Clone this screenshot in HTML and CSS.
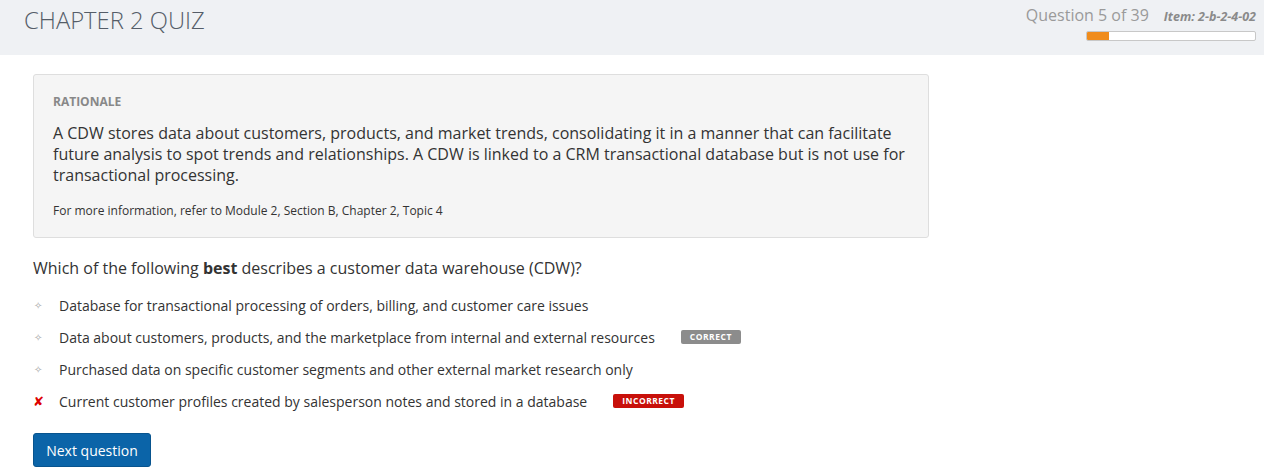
FILE: index.html
```html
<!DOCTYPE html>
<html>
<head>
<meta charset="utf-8">
<link rel="stylesheet" href="styles.css">
</head>
<body>
<header class="topbar">
  <h1 class="title">CHAPTER 2 QUIZ</h1>
  <div class="progress-area">
    <div class="counter"><span class="qnum">Question 5 of 39</span><span class="item">Item: 2-b-2-4-02</span></div>
    <div class="bar"><div class="fill" style="width:13%"></div></div>
  </div>
</header>
<main class="content">
  <section class="rationale">
    <div class="r-label">RATIONALE</div>
    <p class="r-body">A CDW stores data about customers, products, and market trends, consolidating it in a manner that can facilitate future analysis to spot trends and relationships. A CDW is linked to a CRM transactional database but is not use for transactional processing.</p>
    <p class="r-note">For more information, refer to Module 2, Section B, Chapter 2, Topic 4</p>
  </section>
  <p class="question">Which of the following <b>best</b> describes a customer data warehouse (CDW)?</p>
  <ul class="options">
    <li class="opt"><span class="mark dot">&#x2727;</span><span>Database for transactional processing of orders, billing, and customer care issues</span></li>
    <li class="opt"><span class="mark dot">&#x2727;</span><span>Data about customers, products, and the marketplace from internal and external resources</span><span class="badge correct">CORRECT</span></li>
    <li class="opt"><span class="mark dot">&#x2727;</span><span>Purchased data on specific customer segments and other external market research only</span></li>
    <li class="opt"><span class="mark cross">&#x2718;</span><span>Current customer profiles created by salesperson notes and stored in a database</span><span class="badge incorrect">INCORRECT</span></li>
  </ul>
  <button class="next">Next question</button>
</main>
</body>
</html>
```
FILE: styles.css
```css
* { box-sizing: border-box; }
body {
  margin: 0;
  font-family: "Open Sans", "Liberation Sans", sans-serif;
  background: #fff;
  color: #333;
}
.topbar {
  background: #eff1f4;
  height: 55px;
  display: flex;
  justify-content: space-between;
  padding: 0 8px 0 24px;
}
.title {
  margin: 0;
  font-weight: 300;
  font-size: 23.8px;
  line-height: 1;
  color: #555d68;
  padding-top: 9px;
}
.progress-area {
  display: flex;
  flex-direction: column;
  align-items: flex-end;
  padding-top: 4px;
}
.counter {
  display: flex;
  align-items: baseline;
  gap: 15px;
}
.qnum {
  font-size: 16px;
  color: #9a9a9a;
  font-weight: 400;
}
.item {
  font-size: 12.5px;
  font-style: italic;
  font-weight: 700;
  color: #8a8a8a;
}
.bar {
  margin-top: 5px;
  width: 170px;
  height: 10px;
  background: #fff;
  border: 1px solid #c8c8c8;
  border-radius: 2px;
  overflow: hidden;
}
.fill {
  height: 100%;
  background: #f08c1c;
}
.content {
  padding: 19px 0 0 33px;
}
.rationale {
  width: 896px;
  background: #f5f5f5;
  border: 1px solid #dedede;
  border-radius: 3px;
  padding: 19px 20px 18px 19px;
}
.r-label {
  font-size: 12px;
  font-weight: 700;
  color: #888;
  line-height: 16px;
}
.r-body {
  margin: 13px 0 0;
  font-size: 16px;
  line-height: 21px;
  color: #333;
}
.r-note {
  margin: 17px 0 0;
  font-size: 12px;
  line-height: 16px;
  color: #333;
}
.question {
  margin: 19px 0 0;
  font-size: 16px;
  line-height: 22px;
  color: #333;
}
.question b { font-weight: 700; }
.options {
  list-style: none;
  margin: 10px 0 0;
  padding: 0;
}
.opt {
  display: flex;
  align-items: center;
  height: 32px;
  font-size: 14px;
  color: #333;
}
.mark {
  width: 26px;
  flex: none;
  font-size: 10px;
}
.dot {
  color: #a8a8a8;
  padding-left: 1px;
}
.cross {
  color: #d00;
  font-size: 13px;
  font-style: italic;
  font-family: "DejaVu Sans", sans-serif;
}
.badge {
  margin-left: 26px;
  font-size: 8.5px;
  font-weight: 700;
  letter-spacing: 0.5px;
  color: #fff;
  padding: 0 9px;
  line-height: 14px;
  border-radius: 2px;
}
.correct { background: #8c8c8c; }
.incorrect { background: #c8100a; }
.next {
  margin-top: 16px;
  background: #0b64a8;
  color: #fff;
  border: 1px solid #08548e;
  border-radius: 3px;
  font-family: "Open Sans", "Liberation Sans", sans-serif;
  font-size: 14px;
  height: 34px;
  padding: 0 12px;
  width: 118px;
}
```
